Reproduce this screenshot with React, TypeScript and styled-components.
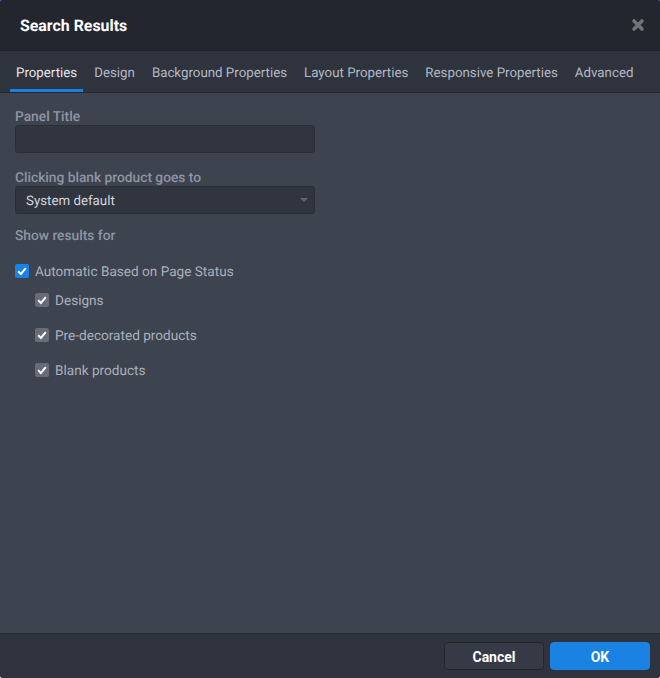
import React from 'react'
import styled, { createGlobalStyle } from 'styled-components'

const GlobalStyle = createGlobalStyle`
  html, body {
    margin: 0;
    padding: 0;
    background: linear-gradient(#1a82e2 50%, #f2f3f5 50%);
  }
  * {
    box-sizing: border-box;
  }
`

const Dialog = styled.div`
  width: 660px;
  height: 678px;
  display: flex;
  flex-direction: column;
  overflow: hidden;
  border-radius: 3px;
  background: #3e4350;
  font-family: Roboto, "Liberation Sans", sans-serif;
  font-size: 13.3px;
  text-rendering: geometricPrecision;
`

const Header = styled.header`
  height: 51px;
  flex: none;
  display: flex;
  align-items: center;
  justify-content: space-between;
  padding: 0 15px 0 20px;
  background: #23262f;
  border-bottom: 1px solid #1d2027;
`

const Title = styled.h1`
  margin: 1px 0 0;
  font-size: 15.9px;
  font-weight: 700;
  color: #fff;
`

const Close = styled.button`
  width: 14px;
  height: 14px;
  padding: 0;
  border: 0;
  background: none;
  display: flex;
  color: #717378;
`

const Tabs = styled.nav`
  height: 42px;
  flex: none;
  display: flex;
  gap: 5px;
  padding-left: 10px;
  background: #2f333d;
  border-bottom: 1px solid #23262e;
`

const Tab = styled.div<{ $active?: boolean }>`
  height: 41px;
  padding: 7px 6px 0;
  display: flex;
  align-items: center;
  white-space: nowrap;
  color: ${p => (p.$active ? '#e6e8ec' : '#b4b9c4')};
  border-bottom: 3px solid ${p => (p.$active ? '#1a82e2' : 'transparent')};
`

const Body = styled.main`
  flex: 1;
  padding: 16px 15px 0;
`

const FieldLabel = styled.label`
  display: block;
  height: 16px;
  line-height: 16px;
  font-size: 13.75px;
  color: #8f95a2;
  font-weight: 500;
`

const Input = styled.div`
  width: 300px;
  height: 28px;
  margin: 0 0 17px;
  background: #31353f;
  border: 1px solid #2a2e37;
  border-radius: 3px;
`

const Select = styled(Input)`
  display: flex;
  align-items: center;
  justify-content: space-between;
  padding: 2px 6px 0 10px;
  margin-bottom: 14px;
  color: #d3d6dc;
`

const Caret = styled.span`
  width: 0;
  height: 0;
  margin-bottom: 2px;
  border-left: 4px solid transparent;
  border-right: 4px solid transparent;
  border-top: 4px solid #5f6572;
`

const Options = styled.div`
  margin-top: 20px;
`

const Option = styled.div<{ $nested?: boolean }>`
  display: flex;
  align-items: center;
  gap: 6px;
  height: 14px;
  margin-left: ${p => (p.$nested ? '20px' : '0')};
  margin-top: ${p => (p.$nested ? '21px' : '0')};
  &:nth-child(2) {
    margin-top: 15px;
  }
`

const OptionText = styled.span`
  padding-top: 2px;
  font-size: 13.6px;
  color: #abb0bb;
  white-space: nowrap;
`

const Box = styled.span<{ $primary?: boolean }>`
  width: 14px;
  height: 14px;
  flex: none;
  display: flex;
  align-items: center;
  justify-content: center;
  border-radius: 2px;
  background: ${p => (p.$primary ? '#1a82e2' : '#686c78')};
`

const Footer = styled.footer`
  height: 45px;
  flex: none;
  display: flex;
  justify-content: flex-end;
  gap: 6px;
  padding: 8px 10px 0 0;
  background: #2f333d;
  border-top: 1px solid #282b34;
`

const Button = styled.button<{ $primary?: boolean }>`
  width: 100px;
  height: 28px;
  padding: 2px 0 0;
  border-radius: 4px;
  border: 1px solid ${p => (p.$primary ? '#1a82e2' : '#21242c')};
  background: ${p => (p.$primary ? '#1a82e2' : '#363a46')};
  color: #fff;
  font-family: inherit;
  font-size: 14px;
  font-weight: 700;
`

const Check = () => (
  <svg width="10" height="10" viewBox="0 0 10 10" aria-hidden="true">
    <path d="M1.2 5.3 L3.9 8 L8.8 2.2" fill="none" stroke="#fff" strokeWidth="2" />
  </svg>
)

const tabs = ['Properties', 'Design', 'Background Properties', 'Layout Properties', 'Responsive Properties', 'Advanced']
const nested = ['Designs', 'Pre-decorated products', 'Blank products']

export default function App() {
  return (
    <>
      <GlobalStyle />
      <Dialog>
        <Header>
          <Title>Search Results</Title>
          <Close aria-label="Close">
            <svg width="14" height="14" viewBox="0 0 14 14">
              <path d="M3 3 L11 11 M11 3 L3 11" stroke="currentColor" strokeWidth="3.6" strokeLinecap="round" />
            </svg>
          </Close>
        </Header>
        <Tabs>
          {tabs.map((t, i) => (
            <Tab key={t} $active={i === 0}>{t}</Tab>
          ))}
        </Tabs>
        <Body>
          <FieldLabel>Panel Title</FieldLabel>
          <Input />
          <FieldLabel>Clicking blank product goes to</FieldLabel>
          <Select>
            System default
            <Caret />
          </Select>
          <FieldLabel>Show results for</FieldLabel>
          <Options>
            <Option>
              <Box $primary><Check /></Box>
              <OptionText>Automatic Based on Page Status</OptionText>
            </Option>
            {nested.map(n => (
              <Option key={n} $nested>
                <Box><Check /></Box>
                <OptionText>{n}</OptionText>
              </Option>
            ))}
          </Options>
        </Body>
        <Footer>
          <Button>Cancel</Button>
          <Button $primary>OK</Button>
        </Footer>
      </Dialog>
    </>
  )
}
